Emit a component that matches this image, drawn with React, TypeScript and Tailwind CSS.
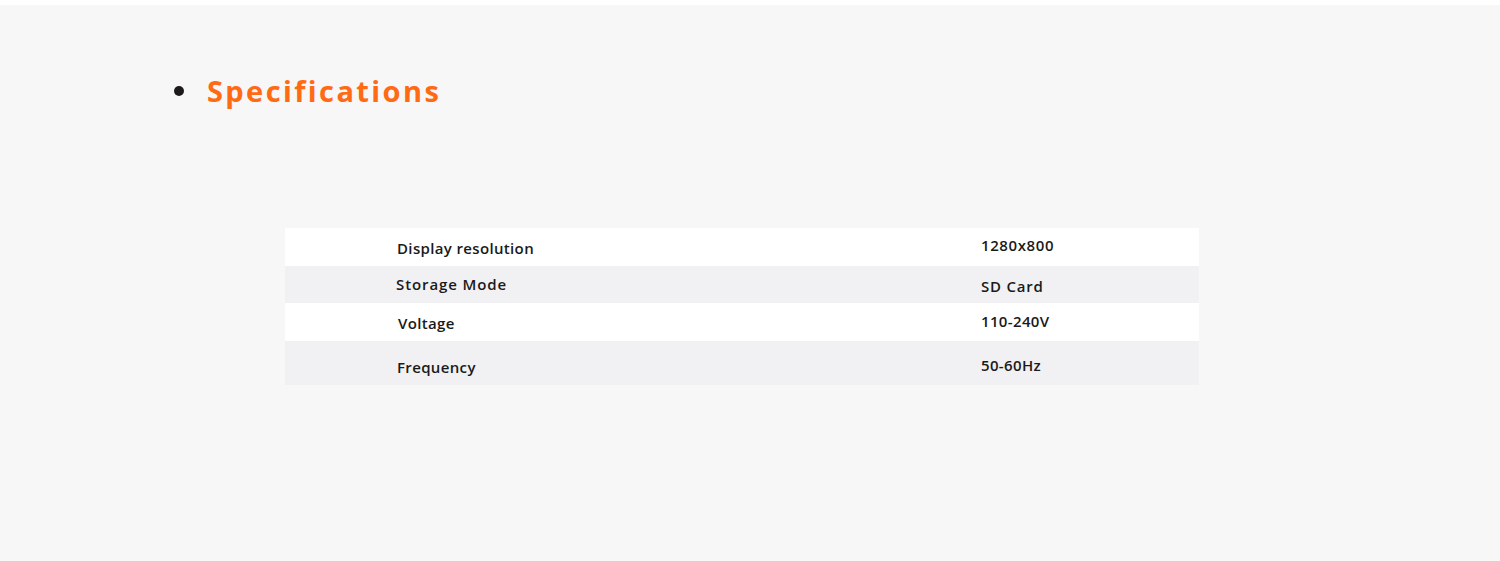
const specs = [
  { label: "Display resolution", value: "1280x800", h: "h-[38px]", bg: "bg-white", lpt: "pt-[10px] pl-[112px]", vpt: "pt-[7px] tracking-[0.6px]" },
  { label: "Storage Mode", value: "SD Card", h: "h-[37px]", bg: "bg-[#f1f1f3]", lpt: "pt-[8px] pl-[111px] tracking-[0.9px]", vpt: "pt-[10px] tracking-[0.8px]" },
  { label: "Voltage", value: "110-240V", h: "h-[38px]", bg: "bg-white", lpt: "pt-[10px] pl-[113px]", vpt: "pt-[8px]" },
  { label: "Frequency", value: "50-60Hz", h: "h-[44px]", bg: "bg-[#f1f1f3]", lpt: "pt-[16px] pl-[112px]", vpt: "pt-[14px]" },
];

export default function App() {
  return (
    <div className="min-h-[561px] bg-white pt-[5px] font-['Open_Sans',sans-serif]">
      <div className="h-[556px] bg-[#f7f7f7]">
        <div className="flex items-center pl-[174px] pt-[66px]">
          <span className="h-[10px] w-[10px] rounded-full bg-[#1c1a1a]" />
          <h2 className="ml-[23px] text-[29px] font-bold leading-[40px] tracking-[2.4px] text-[#ff6a13]">
            Specifications
          </h2>
        </div>

        <div className="ml-[285px] mt-[117px] w-[914px] text-[15px] font-semibold leading-[20px] tracking-[0.35px] text-[#1a1a1a]">
          {specs.map((row) => (
            <div key={row.label} className={`flex ${row.h} ${row.bg}`}>
              <div className={`w-[696px] ${row.lpt}`}>{row.label}</div>
              <div className={`flex-1 ${row.vpt}`}>{row.value}</div>
            </div>
          ))}
        </div>
      </div>
    </div>
  );
}
